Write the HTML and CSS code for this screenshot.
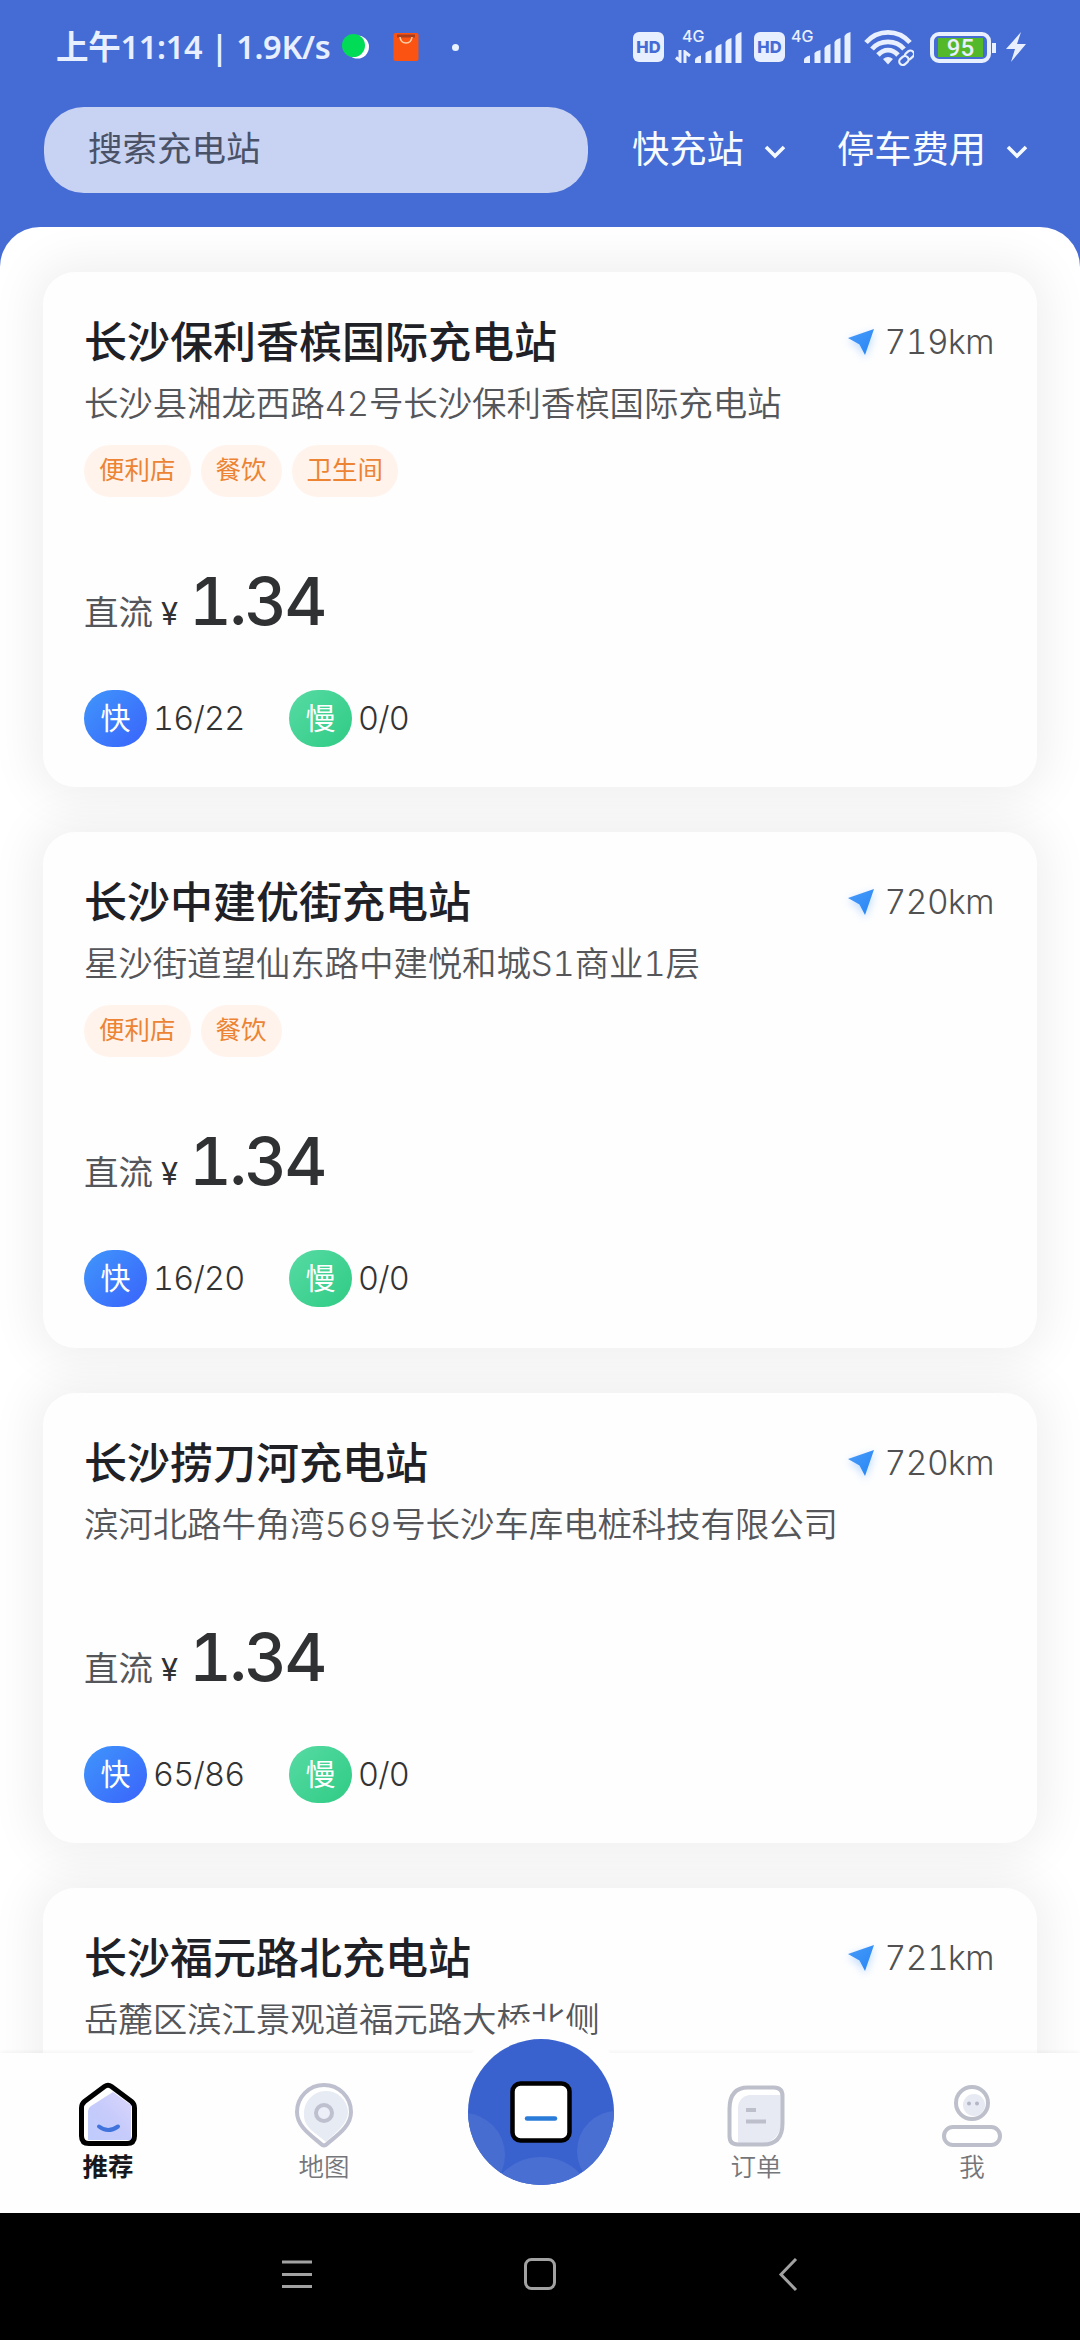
FILE: index.html
```html
<!DOCTYPE html>
<html lang="zh-CN">
<head>
<meta charset="utf-8">
<title>充电站</title>
<link rel="stylesheet" href="styles.css">
</head>
<body>
<svg class="defs" width="0" height="0">
  <defs>
    <linearGradient id="arrow" x1="0" y1="0" x2="1" y2="1"><stop offset="0" stop-color="#4a9bf8"/><stop offset="1" stop-color="#2586f5"/></linearGradient>
    <symbol id="nav-arrow" viewBox="0 0 38 38"><path d="M6 15 L32 6 L23 32 L17.500 21.500 Z" fill="url(#arrow)"/></symbol>
    <symbol id="chevron" viewBox="0 0 24 18"><path d="M3 4 L12 13 L21 4" fill="none" stroke="#f4faff" stroke-width="3.600"/></symbol>
    <symbol id="bars" viewBox="0 0 50 32"><path d="M2 31V28Q2 25 8 23.500V31Z M12.500 31V21Q14 19 18.500 18V31Z M22.500 31V16Q24 13 28.500 12V31Z M32.500 31V10Q34 7 38.500 6V31Z M42.500 31V4Q44 1 48.500 0V31Z" fill="#e8efff"/></symbol>
  </defs>
</svg>
<div class="app">
  <header class="header">
    <div class="status">
      <span class="clock">上午11:14 | 1.9K/s</span>
      <svg class="st-moon" width="28" height="26" viewBox="0 0 28 26"><circle cx="15.500" cy="13" r="11.500" fill="#fff"/><circle cx="11.500" cy="11.500" r="11.500" fill="#00dc55"/></svg>
      <svg class="st-bag" width="26" height="30" viewBox="0 0 26 30"><rect x=".5" y="1" width="25" height="28" rx="2" fill="#fb5412"/><path d="M4 4h18" stroke="#a93c1c" stroke-width="3"/><path d="M7 5c1 8 11 8 12 0" fill="none" stroke="#ffd2a8" stroke-width="1.500"/></svg>
      <i class="st-dot"></i>
      <span class="st-spacer"></span>
      <span class="hd">HD</span>
      <span class="sig sig1"><b>4G</b><svg class="updown" width="16" height="13" viewBox="0 0 16 13"><path d="M5 0V11 L1 7.500 M10 13V2 L15 6" fill="none" stroke="#e8efff" stroke-width="3"/></svg><svg class="bars" width="50" height="32"><use href="#bars"/></svg></span>
      <span class="hd hd2">HD</span>
      <span class="sig sig2"><b>4G</b><svg class="bars" width="50" height="32"><use href="#bars"/></svg></span>
      <svg class="wifi" width="50" height="38" viewBox="0 0 50 38"><g fill="none" stroke="#e8efff" stroke-width="4.800"><path d="M2 14.500C14 1 34 1 46 14.500"/><path d="M8 21C16 11.500 32 11.500 40 21"/><path d="M14 27C20 20.500 28 20.500 34 27"/></g><path d="M19 31Q24 27 29 31L24 36.500Z" fill="#e8efff"/><g fill="#456bd5" stroke="#e8efff" stroke-width="2.200"><rect x="-6.500" y="-3.500" width="10" height="7" rx="3.500" transform="translate(46.500 26) rotate(-42)"/><rect x="-6.500" y="-3.500" width="10" height="7" rx="3.500" transform="translate(41 31.500) rotate(-42)"/></g></svg>
      <span class="battery"><span class="level">95</span></span>
      <svg class="bolt" width="20" height="30" viewBox="0 0 20 30"><path d="M15 0 L0 17 H9 L5 30 L20 12 H11 Z" fill="#e8efff"/></svg>
    </div>
    <div class="tools">
      <div class="search">搜索充电站</div>
      <div class="filter">快充站<svg width="24" height="18"><use href="#chevron"/></svg></div>
      <div class="filter filter-fee">停车费用<svg width="24" height="18"><use href="#chevron"/></svg></div>
    </div>
  </header>
  <main class="list">
    <article class="card">
      <div class="head"><h2>长沙保利香槟国际充电站</h2><span class="dist"><svg width="38" height="38"><use href="#nav-arrow"/></svg>719km</span></div>
      <p class="addr">长沙县湘龙西路42号长沙保利香槟国际充电站</p>
      <div class="tags"><span>便利店</span><span>餐饮</span><span>卫生间</span></div>
      <div class="price"><span>直流</span><i>¥</i><b>1.34</b></div>
      <div class="chips"><em class="fast">快</em><span class="n1">16/22</span><em class="slow">慢</em><span>0/0</span></div>
    </article>
    <article class="card">
      <div class="head"><h2>长沙中建优街充电站</h2><span class="dist"><svg width="38" height="38"><use href="#nav-arrow"/></svg>720km</span></div>
      <p class="addr">星沙街道望仙东路中建悦和城S1商业1层</p>
      <div class="tags"><span>便利店</span><span>餐饮</span></div>
      <div class="price"><span>直流</span><i>¥</i><b>1.34</b></div>
      <div class="chips"><em class="fast">快</em><span class="n1">16/20</span><em class="slow">慢</em><span>0/0</span></div>
    </article>
    <article class="card">
      <div class="head"><h2>长沙捞刀河充电站</h2><span class="dist"><svg width="38" height="38"><use href="#nav-arrow"/></svg>720km</span></div>
      <p class="addr">滨河北路牛角湾569号长沙车库电桩科技有限公司</p>
      <div class="price"><span>直流</span><i>¥</i><b>1.34</b></div>
      <div class="chips"><em class="fast">快</em><span class="n1">65/86</span><em class="slow">慢</em><span>0/0</span></div>
    </article>
    <article class="card">
      <div class="head"><h2>长沙福元路北充电站</h2><span class="dist"><svg width="38" height="38"><use href="#nav-arrow"/></svg>721km</span></div>
      <p class="addr">岳麓区滨江景观道福元路大桥北侧</p>
      <div class="price"></div>
    </article>
  </main>
  <nav class="tabs">
    <div class="tab active">
      <svg width="64" height="68" viewBox="0 0 64 68"><defs><linearGradient id="hg" x1="1" y1="0" x2="0" y2="1"><stop offset="0" stop-color="#dcd6fb"/><stop offset=".5" stop-color="#c6cbfb"/><stop offset="1" stop-color="#bfccfd"/></linearGradient></defs><path d="M28.500 5.500 Q32 3 35.500 5.500 L55.500 20.500 Q58.500 23 58.500 27 V55 Q58.500 62.500 51 62.500 H13 Q5.500 62.500 5.500 55 V27 Q5.500 23 8.500 20.500Z" fill="#fff"/><path d="M37 11 L55 24 V59 H12 V30 Q12 27 15 25Z" fill="url(#hg)"/><path d="M28.500 5.500 Q32 3 35.500 5.500 L55.500 20.500 Q58.500 23 58.500 27 V55 Q58.500 62.500 51 62.500 H13 Q5.500 62.500 5.500 55 V27 Q5.500 23 8.500 20.500Z" fill="none" stroke="#000" stroke-width="5"/><path d="M23 45.500 Q32 52.500 42 45.500" fill="none" stroke="#4074dc" stroke-width="4" stroke-linecap="round"/></svg>
      <span>推荐</span>
    </div>
    <div class="tab">
      <svg width="64" height="68" viewBox="0 0 64 68"><path d="M29 63 C20 55 4 46 4 31 A28 28 0 0 1 60 31 C60 46 44 55 35 63 Q32 66 29 63Z" fill="#fff"/><path d="M34 61 C25 53 11 46 12 33 A22 22 0 0 1 56 31 C56 43 43 52 34 61Z" fill="#e7ebf3"/><path d="M29 63 C20 55 5 46 5 31 A27 27 0 0 1 59 31 C59 46 44 55 35 63 Q32 66 29 63Z" fill="none" stroke="#bfc0cf" stroke-width="4"/><circle cx="32" cy="32" r="8" fill="#eceff7" stroke="#bfc0cf" stroke-width="4"/></svg>
      <span>地图</span>
    </div>
    <div class="tab scan">
      <div class="halo"><svg width="146" height="146" viewBox="0 0 146 146"><defs><clipPath id="disc"><circle cx="73" cy="73" r="73"/></clipPath></defs><g clip-path="url(#disc)"><rect width="146" height="146" fill="#3a62ce"/><circle cx="-5" cy="116" r="42" fill="#486dd1"/><circle cx="149" cy="112" r="40" fill="#4a6fd3"/><circle cx="73" cy="172" r="54" fill="#4a6fd3"/></g><rect x="44.500" y="44.500" width="57" height="57" rx="8" fill="#fff" stroke="#000" stroke-width="4.500"/><path d="M59 79.500H87" stroke="#2b7cd9" stroke-width="4.500" stroke-linecap="round"/></svg></div>
    </div>
    <div class="tab">
      <svg width="64" height="68" viewBox="0 0 64 68"><path d="M24 6.500 H50 Q58.500 6.500 58.500 15 V42 Q58.500 63.500 39 63.500 H14 Q5.500 63.500 5.500 55 V28 Q5.500 6.500 24 6.500Z" fill="#fff"/><path d="M25 14 H57 V44 Q55 58 41 62 H14 V26 Q15 16 25 14Z" fill="#e7e9f3"/><path d="M24 6.500 H50 Q58.500 6.500 58.500 15 V42 Q58.500 63.500 39 63.500 H14 Q5.500 63.500 5.500 55 V28 Q5.500 6.500 24 6.500Z" fill="none" stroke="#bdbfcb" stroke-width="4"/><path d="M22 29H32M22 40.500H42" stroke="#bdbfcb" stroke-width="4"/></svg>
      <span>订单</span>
    </div>
    <div class="tab">
      <svg width="64" height="68" viewBox="0 0 64 68"><circle cx="32" cy="22" r="16" fill="#fff" stroke="#bdbfcb" stroke-width="4"/><circle cx="34" cy="24" r="11" fill="#e7e9f3"/><circle cx="29" cy="22.500" r="2" fill="#b4b6c5"/><circle cx="37" cy="22.500" r="2" fill="#b4b6c5"/><rect x="4" y="46" width="56" height="18" rx="9" fill="#fff" stroke="#bdbfcb" stroke-width="4"/></svg>
      <span>我</span>
    </div>
  </nav>
  <footer class="sysnav">
    <svg width="36" height="36" viewBox="0 0 36 36"><path d="M3 4H33M3 16.500H33M3 28.500H33" stroke="#a2a2a2" stroke-width="3"/></svg>
    <svg width="36" height="36" viewBox="0 0 36 36"><rect x="3.500" y="1.500" width="29" height="29" rx="6" fill="none" stroke="#a2a2a2" stroke-width="3"/></svg>
    <svg width="36" height="36" viewBox="0 0 36 36"><path d="M31 1 L16 16.500 L31 32" fill="none" stroke="#a2a2a2" stroke-width="3"/></svg>
  </footer>
</div>
</body>
</html>
```
FILE: styles.css
```css
* { box-sizing: border-box; }
body { margin: 0; background: #456bd5; font-family: Inter, "Noto Sans CJK SC", sans-serif; }
h2, p { margin: 0; }
i, em { font-style: normal; }
.defs { display: block; }
.app { width: 1080px; height: 2340px; display: flex; flex-direction: column; overflow: hidden; background: #456bd5; }

.header { flex: none; height: 227px; }
.status { display: flex; align-items: center; height: 94px; padding: 0 54px 0 56px; color: #e8efff; }
.clock { font-family: "Noto Sans", "Noto Sans CJK SC", sans-serif; font-weight: 600; font-size: 32.500px; letter-spacing: -.3px; line-height: 50px; white-space: nowrap; width: 273px; }
.st-moon { margin-left: 13px; }
.st-bag { margin-left: 23px; }
.st-dot { width: 7px; height: 7px; border-radius: 50%; background: #e8f2ff; margin-left: 33px; }
.st-spacer { flex: 1; }
.hd { width: 31px; height: 30px; border-radius: 6px; background: #e8efff; color: #456bd5; font-size: 16.500px; font-weight: 800; line-height: 30px; text-align: center; }
.sig { display: grid; position: relative; height: 34px; align-items: end; justify-items: end; }
.sig1 { width: 68px; margin-left: 11px; }
.sig2 { width: 61px; margin-left: 6px; }
.hd2 { margin-left: 11px; }
.sig b { position: absolute; left: 7px; top: -3px; font: 500 16px/18px Inter, sans-serif; }
.sig2 b { left: 0; }
.updown { position: absolute; left: 0; bottom: 1px; }
.bars { display: block; }
.wifi { margin-left: 12px; }
.battery { position: relative; width: 61px; height: 31px; border: 4px solid #e8efff; border-radius: 9px; padding: 2px 4px; margin-left: 16px; }
.battery::after { content: ""; position: absolute; right: -9px; top: 7px; width: 4px; height: 10px; background: #e8efff; }
.level { display: block; height: 19px; background: #54b82b; font: 500 24px/20px Roboto, sans-serif; text-align: center; }
.bolt { margin-left: 15px; }

.tools { display: flex; align-items: center; padding: 13px 0 0 44px; }
.search { width: 544px; height: 86px; border-radius: 40px; background: #c8d3f3; color: #4a5268; font-size: 34.500px; line-height: 84px; padding-left: 44px; }
.filter { display: flex; align-items: center; margin-left: 44px; color: #f8fcff; font-size: 37.300px; line-height: 84px; }
.filter svg { margin: 3px 0 0 19px; }
.filter-fee { margin-left: 50px; }

.list { flex: 1; min-height: 0; overflow: hidden; display: flex; flex-direction: column; gap: 45px; padding: 45px 43px 0; background: #fff; border-radius: 40px 40px 0 0; font-variant-numeric: tabular-nums; }
.card { flex: none; padding: 41px 43px 40px 41px; border-radius: 32px; background: #fefefe; box-shadow: 0 0 46px 11px rgba(0, 0, 0, .062); }
.card:nth-child(2) { padding-bottom: 41px; }
.head { display: flex; justify-content: space-between; height: 58px; line-height: 58px; }
h2 { font-weight: 500; font-size: 43px; color: #202126; }
.dist { display: flex; align-items: center; font-size: 33.500px; letter-spacing: -.5px; color: #515151; font-weight: 300; }
.dist svg { margin-right: 5px; filter: drop-shadow(0 3px 4px rgba(60, 150, 255, .35)); }
.addr { height: 56px; line-height: 56px; margin-top: 5px; font-size: 34.500px; letter-spacing: -.13px; color: #55565a; font-weight: 350; white-space: nowrap; }
.tags { display: flex; gap: 10px; height: 52px; margin-top: 13px; }
.tags span { padding: 0 15px; border-radius: 26px; background: #fff3ec; color: #ec8433; font-size: 25.500px; line-height: 50px; }
.price { display: flex; align-items: baseline; height: 80px; margin-top: 64px; line-height: 80px; color: #303133; }
.price span { font-size: 34.500px; color: #55565a; }
.price i { font-size: 31px; margin-left: 8px; }
.price b { font-size: 66px; letter-spacing: -2.600px; font-weight: 460; margin-left: 11px; }
.chips { display: flex; align-items: center; height: 57px; margin-top: 49px; font-size: 32.500px; letter-spacing: -.8px; font-weight: 300; color: #333; }
.chips em { width: 63px; height: 57px; border-radius: 29px; margin-right: 6px; color: #fff; font-size: 30px; letter-spacing: 0; line-height: 56px; text-align: center; font-weight: 400; }
.n1 { width: 136px; }
.fast { background: linear-gradient(135deg, #3f96fb, #3a63fb); }
.slow { background: linear-gradient(135deg, #57dba4, #2fcb84); }

.tabs { flex: none; position: relative; height: 160px; display: grid; grid-template-columns: repeat(5, 1fr); background: #fefefe; box-shadow: 0 -1px 4px rgba(0, 0, 0, .05); }
.tab { display: flex; flex-direction: column; align-items: center; padding-top: 28px; color: #75767a; font-size: 25.500px; line-height: 36px; font-weight: 350; }
.active { color: #17181d; font-weight: 700; }
.scan { padding: 0 0 0 2px; }
.halo { width: 182px; height: 182px; margin-top: -32px; padding: 18px; border-radius: 50%; background: #fefefe; }
.halo svg { display: block; }

.sysnav { flex: none; height: 127px; display: flex; justify-content: center; gap: 207px; padding-top: 45px; background: #000; }
```
